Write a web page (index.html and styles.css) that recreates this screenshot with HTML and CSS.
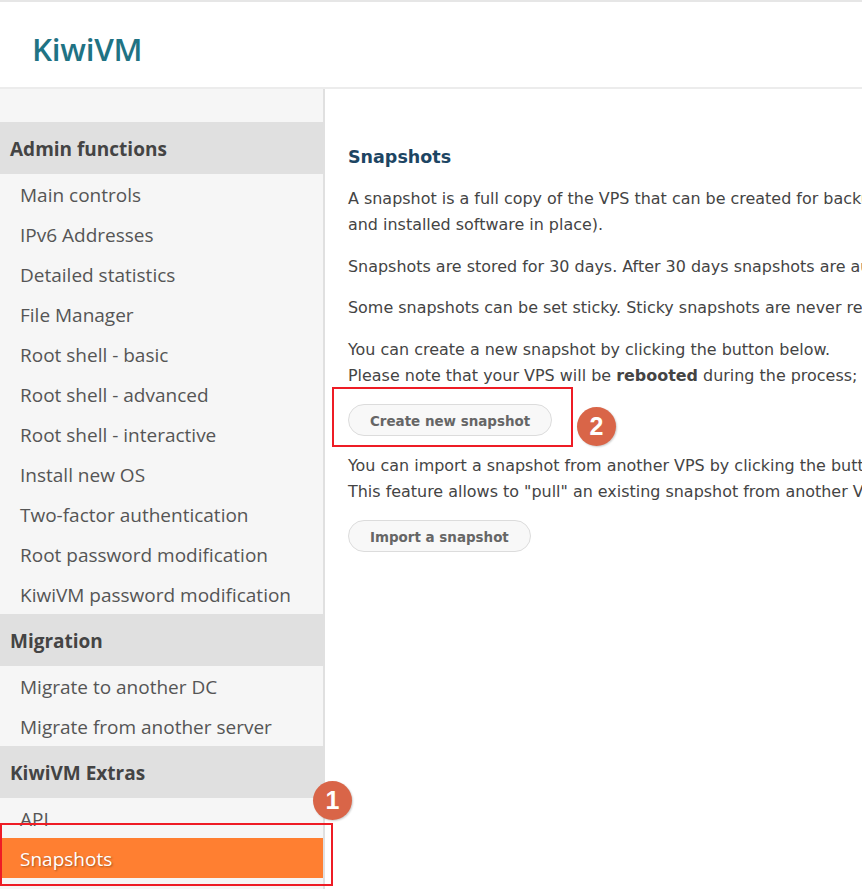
FILE: index.html
```html
<!DOCTYPE html>
<html lang="en">
<head>
    <meta charset="UTF-8">
    <meta name="viewport" content="width=device-width, initial-scale=1.0">
    <title>KiwiVM - Snapshots</title>
    <link rel="stylesheet" href="styles.css">
</head>
<body>
    <header class="topbar">
        <div class="logo">KiwiVM</div>
    </header>

    <div class="layout">
        <nav class="sidebar">
            <h3 class="nav-title">Admin functions</h3>
            <a class="nav-item" href="#">Main controls</a>
            <a class="nav-item" href="#">IPv6 Addresses</a>
            <a class="nav-item" href="#">Detailed statistics</a>
            <a class="nav-item" href="#">File Manager</a>
            <a class="nav-item" href="#">Root shell - basic</a>
            <a class="nav-item" href="#">Root shell - advanced</a>
            <a class="nav-item" href="#">Root shell - interactive</a>
            <a class="nav-item" href="#">Install new OS</a>
            <a class="nav-item" href="#">Two-factor authentication</a>
            <a class="nav-item" href="#">Root password modification</a>
            <a class="nav-item" href="#">KiwiVM password modification</a>
            <h3 class="nav-title">Migration</h3>
            <a class="nav-item" href="#">Migrate to another DC</a>
            <a class="nav-item" href="#">Migrate from another server</a>
            <h3 class="nav-title">KiwiVM Extras</h3>
            <a class="nav-item" href="#">API</a>
            <a class="nav-item nav-active" href="#">Snapshots</a>
        </nav>

        <main class="content">
            <h2>Snapshots</h2>
            <p>A snapshot is a full copy of the VPS that can be created for backup purposes (with all files<br>and installed software in place).</p>
            <p>Snapshots are stored for 30 days. After 30 days snapshots are automatically removed.</p>
            <p>Some snapshots can be set sticky. Sticky snapshots are never removed automatically.</p>
            <p>You can create a new snapshot by clicking the button below.<br>Please note that your VPS will be <b>rebooted</b> during the process; it takes a few minutes.</p>
            <button class="button">Create new snapshot</button>
            <p>You can import a snapshot from another VPS by clicking the button below.<br>This feature allows to "pull" an existing snapshot from another VPS using a token.</p>
            <button class="button">Import a snapshot</button>
        </main>
    </div>

    <!-- annotations on top of the page -->
    <div class="mark mark-nav"></div>
    <div class="mark mark-button"></div>
    <div class="badge badge-one">1</div>
    <div class="badge badge-two">2</div>
</body>
</html>
```

FILE: styles.css
```css
html, body {
    height: 100%;
}

body {
    margin: 0;
    overflow: hidden;
    background-color: white;
    color: #444;
    font-family: "Open Sans", sans-serif;
    display: flex;
    flex-direction: column;
}

.topbar {
    height: 85px;
    flex: none;
    border-top: 2px solid #e6e6e6;
    border-bottom: 2px solid #ececec;
    display: flex;
    align-items: center;
    padding-left: 32px;
}

.logo {
    padding-top: 8px;
    font-family: "Open Sans", sans-serif;
    font-size: 31.5px;
    font-weight: 600;
    letter-spacing: -0.3px;
    color: #1f7384;
}

.layout {
    flex: 1;
    display: flex;
    min-height: 0;
}

.sidebar {
    width: 323px;
    flex: none;
    padding-top: 33px;
    background-color: #f6f6f6;
    border-right: 2px solid #e0e0e0;
}

.nav-title {
    height: 52px;
    margin: 0;
    padding-left: 10px;
    line-height: 54px;
    font-size: 19px;
    font-weight: 700;
    background-color: #e0e0e0;
    color: #444;
}

.nav-item {
    display: block;
    height: 40px;
    padding-left: 20px;
    line-height: 42px;
    font-size: 19px;
    color: #555;
    text-decoration: none;
}

.nav-active {
    background-color: #ff7f31;
    color: white;
    text-shadow: 1px 1px 2px rgba(0,0,0,0.35);
}

.content {
    flex: 1;
    min-width: 0;
    padding: 55px 0 0 23px;
    overflow: hidden;
    white-space: nowrap;
    font-family: "DejaVu Sans", sans-serif;
    font-size: 15.95px;
    line-height: 26px;
}

.content h2 {
    margin: 0 0 16px;
    font-size: 17.5px;
    line-height: 26px;
    color: #1d4563;
}

.content p {
    margin: 0 0 15.6px;
}

.button {
    display: block;
    height: 32px;
    margin: 0 0 16.5px;
    padding: 2px 21px 0;
    border: 1px solid #dcdcdc;
    border-radius: 16px;
    background-color: #f8f8f8;
    color: #666;
    font-family: "DejaVu Sans", sans-serif;
    font-size: 13.45px;
    font-weight: 700;
}

.mark {
    position: absolute;
    border: 2px solid #ee1c25;
}

.mark-nav {
    left: 0;
    top: 823px;
    width: 329px;
    height: 59px;
}

.mark-button {
    left: 332px;
    top: 387px;
    width: 237px;
    height: 56px;
}

.badge {
    position: absolute;
    width: 39px;
    height: 39px;
    border-radius: 50%;
    background-color: #d96548;
    color: white;
    font-family: "Liberation Sans", sans-serif;
    font-size: 25px;
    font-weight: 700;
    line-height: 39px;
    text-align: center;
    box-shadow: 1px 1px 2px rgba(0,0,0,0.2);
}

.badge-one {
    left: 313px;
    top: 781px;
}

.badge-two {
    left: 577px;
    top: 407px;
}
```
